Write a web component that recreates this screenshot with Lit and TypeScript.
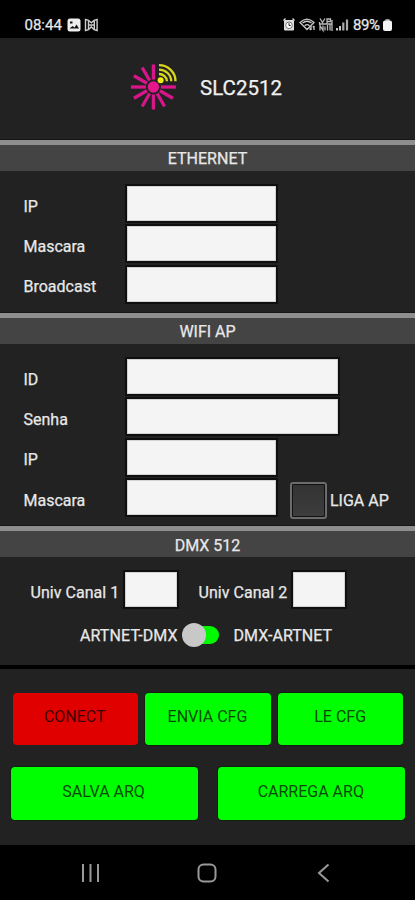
import { LitElement, html, css, svg } from "lit";
import { customElement } from "lit/decorators.js";

const RAYS = [0, 90, 120, 150, 180, 210, 240, 270, 300, 330];

@customElement("app-root")
export class AppRoot extends LitElement {
  static styles = css`
    :host {
      display: flex;
      flex-direction: column;
      width: 415px;
      height: 900px;
      overflow: hidden;
      background: #222;
      color: #e8e8e8;
      font: 400 16px/20px Roboto, "Liberation Sans", sans-serif;
      -webkit-text-stroke: 0.25px currentColor;
    }
    * { box-sizing: border-box; }
    svg { display: block; flex: none; }
    .status {
      display: flex;
      align-items: center;
      height: 38px;
      padding: 12px 22px 0 24.5px;
      background: #000;
      font-size: 15px;
      line-height: 26px;
      flex: none;
    }
    .clock { width: 42.5px; letter-spacing: 0; }
    .grow { flex: 1; }
    .pct { letter-spacing: -0.4px; width: 29px; }
    .header {
      display: flex;
      align-items: center;
      gap: 22px;
      height: 102px;
      padding: 0 0 5px 130px;
      flex: none;
    }
    .name { font-size: 20.5px; line-height: 26px; padding-top: 3px; color: #f0f0f0; }
    .title {
      height: 31px;
      flex: none;
      border-top: 5px solid #8e8e8e;
      background: #444;
      text-align: center;
      line-height: 27px;
      box-shadow: 0 -1px 0 #161616;
    }
    .ethernet { height: 173px; }
    .wifi { height: 213px; }
    .dmx { height: 139px; }
    .dmx .title { line-height: 29px; }
    section { flex: none; }
    .fields {
      display: flex;
      flex-direction: column;
      gap: 5.4px;
      padding: 15px 0 0 23.5px;
    }
    .row { display: flex; align-items: center; height: 35px; }
    .label { width: 103.5px; padding-top: 6px; }
    .field {
      width: 148.5px;
      height: 35px;
      background: #f4f4f4;
      border: 1px solid #d2d2d2;
      box-shadow: 0 0 0 2px #0f0f0f;
    }
    .wide { width: 211px; }
    .small { width: 52.5px; }
    .check {
      width: 37px;
      height: 37px;
      margin: 5px 3px 0 14.5px;
      border: 2px solid #6c6c6c;
      border-radius: 3px;
      background: linear-gradient(#333, #3d3d3d);
      box-shadow: inset 0 0 0 1px #111;
      flex: none;
    }
    .checktext { padding-top: 6px; }
    .channels { display: flex; padding: 15px 0 0 30.5px; }
    .chan { display: flex; align-items: center; height: 35px; }
    .chan .text { width: 94px; padding-top: 6px; letter-spacing: 0.04px; }
    .chan + .chan { margin-left: 21.5px; }
    .mode { display: flex; align-items: center; height: 25px; margin-top: 15px; padding-left: 80px; }
    .left, .right { padding-top: 2px; }
    .left { width: 101.5px; letter-spacing: 0.1px; }
    .toggle { display: flex; align-items: center; width: 38px; height: 25px; }
    .thumb { width: 24px; height: 24px; border-radius: 50%; background: #c8c8c8; z-index: 1; }
    .track { width: 26px; height: 18px; margin-left: -12.5px; border-radius: 0 9px 9px 0; background: #00f800; }
    .right { margin-left: 14px; letter-spacing: 0.05px; }
    .actions { border-top: 4px solid #000; height: 180px; padding: 23.5px 0 0; }
    .line { display: flex; gap: 7.5px; padding-left: 12.7px; }
    .line.two { gap: 20px; margin-top: 22px; padding-left: 10.5px; }
    .btn {
      width: 125.2px;
      height: 52.7px;
      padding: 0 1px 4px 0;
      border: 0;
      border-radius: 4px;
      background: #00ff00;
      box-shadow: 0 0 0 1px #10200f;
      color: #064a06;
      font: inherit;
      -webkit-text-stroke: 0;
    }
    .two .btn { width: 187.2px; }
    .btn.red { background: #e00000; color: #3c0000; box-shadow: none; }
    .nav { background: #000; flex: 1; display: flex; padding: 17px 0 0 80px; }
    .nav svg + svg { margin-left: 96px; }
  `;

  private logo() {
    return svg`<svg width="48" height="50" viewBox="130 62 48 50">
      <g stroke="#d8168a" stroke-width="3.3">
        ${RAYS.map((a) => svg`<path d="M153.4 79.5V64.5" transform="rotate(${a} 153.4 87)"/>`)}
      </g>
      <circle cx="153.4" cy="87" r="5.7" fill="#e3168b"/>
      <circle cx="160.6" cy="80.2" r="3" fill="#f4ec16"/>
      <g fill="none" stroke="#d9d51f" stroke-width="2.3">
        <path d="M159 65.2A16.5 16 0 0 1 175.5 81.2"/>
        <path d="M159 69.6A12.2 11.7 0 0 1 171.2 81.2"/>
        <path d="M159 74A8 7.5 0 0 1 167 81.2"/>
      </g>
    </svg>`;
  }

  private row(label: string, cls = "", extra: unknown = "") {
    return html`<div class="row"><span class="label">${label}</span><span class="field ${cls}"></span>${extra}</div>`;
  }

  render() {
    return html`
      <div class="status">
        <span class="clock">08:44</span>
        <svg width="34" height="16" viewBox="0 0 34 16">
          <rect x="0.5" y="1.5" width="13" height="13" rx="2.5" fill="#eee"/>
          <path d="M3 4.5h2.5v2H3zM2.5 11.5l3-2.5 2 1.5 2-3 2.500 4z" fill="#111"/>
          <path d="M18.5 13.5v-11l3 .8 2.8 2.5 2.8-2.5 3-.8v11l-3-.8-2.8-3-2.8 3z M21.5 4v8.500M27.300 4v8.500M22 8h5" fill="none" stroke="#ccc" stroke-width="1.4"/>
        </svg>
        <span class="grow"></span>
        <svg width="70" height="16" viewBox="283 17 70 16">
          <rect x="284" y="20" width="10" height="10.500" rx="1" fill="#ddd"/>
          <path d="M283.500 20.500l2-2M294.500 20.500l-2-2" stroke="#ddd" stroke-width="1.3"/>
          <circle cx="289" cy="25.300" r="3.300" fill="#fff" stroke="#777" stroke-width="1"/>
          <path d="M289 23.200v2.300h1.700" fill="none" stroke="#222"/>
          <g fill="none" stroke="#ccc" stroke-width="1.300">
            <path d="M300 22.500Q307 15.800 314 22.500L307 29.500zM302.500 23Q307 19.500 311.500 23M304.700 25.700Q307 23.500 309.500 25.700"/>
            <path d="M311 30v-4M309.500 28.500l1.500 1.500M314 26v4M312.800 27.300l1.200-1.300"/>
          </g>
          <g fill="none" stroke="#bbb" stroke-width="1.300">
            <path d="M320 18.500l2.500 4 2.500-4M327 24v-5h3.500v2.500H327M320 30.500v-5l3 5v-5M325 30.500v-4M327.500 25v5.500M330 30.500v-6M332 20v11M319.500 22v2h13"/>
          </g>
          <path d="M337 28v2.500M340 26v4.500" stroke="#ddd" stroke-width="1.800"/>
          <path d="M343.300 22.500v8" stroke="#aaa" stroke-width="2.200"/>
          <path d="M347 19.500v11" stroke="#aaa" stroke-width="2.200"/>
        </svg>
        <span class="pct">89%</span>
        <svg width="11" height="14" viewBox="0 0 11 14">
          <rect x="3.500" y="1" width="4" height="3" fill="#999"/>
          <rect x="1" y="2.500" width="9" height="10.500" rx="2" fill="#f4f4f4"/>
        </svg>
      </div>
      <div class="header">${this.logo()}<span class="name">SLC2512</span></div>
      <section class="ethernet">
        <div class="title">ETHERNET</div>
        <div class="fields">${this.row("IP")}${this.row("Mascara")}${this.row("Broadcast")}</div>
      </section>
      <section class="wifi">
        <div class="title">WIFI AP</div>
        <div class="fields">
          ${this.row("ID", "wide")}${this.row("Senha", "wide")}${this.row("IP")}
          ${this.row("Mascara", "", html`<span class="check"></span><span class="checktext">LIGA AP</span>`)}
        </div>
      </section>
      <section class="dmx">
        <div class="title">DMX 512</div>
        <div class="channels">
          <div class="chan"><span class="text">Univ Canal 1</span><span class="field small"></span></div>
          <div class="chan"><span class="text">Univ Canal 2</span><span class="field small"></span></div>
        </div>
        <div class="mode">
          <span class="left">ARTNET-DMX</span>
          <span class="toggle"><span class="thumb"></span><span class="track"></span></span>
          <span class="right">DMX-ARTNET</span>
        </div>
      </section>
      <section class="actions">
        <div class="line">
          <button class="btn red">CONECT</button><button class="btn">ENVIA CFG</button><button class="btn">LE CFG</button>
        </div>
        <div class="line two">
          <button class="btn">SALVA ARQ</button><button class="btn">CARREGA ARQ</button>
        </div>
      </section>
      <div class="nav">
        <svg width="20" height="22" viewBox="80 862 20 22"><path d="M83 864v18M90.500 864v18M98 864v18" stroke="#999" stroke-width="2"/></svg>
        <svg width="22" height="22" viewBox="196 862 22 22"><rect x="198.500" y="864.500" width="17" height="17" rx="5" fill="none" stroke="#999" stroke-width="2"/></svg>
        <svg width="20" height="22" viewBox="314 862 20 22"><path d="M328.500 864.500L319 873l9.500 8.500" fill="none" stroke="#999" stroke-width="2"/></svg>
      </div>
    `;
  }
}
